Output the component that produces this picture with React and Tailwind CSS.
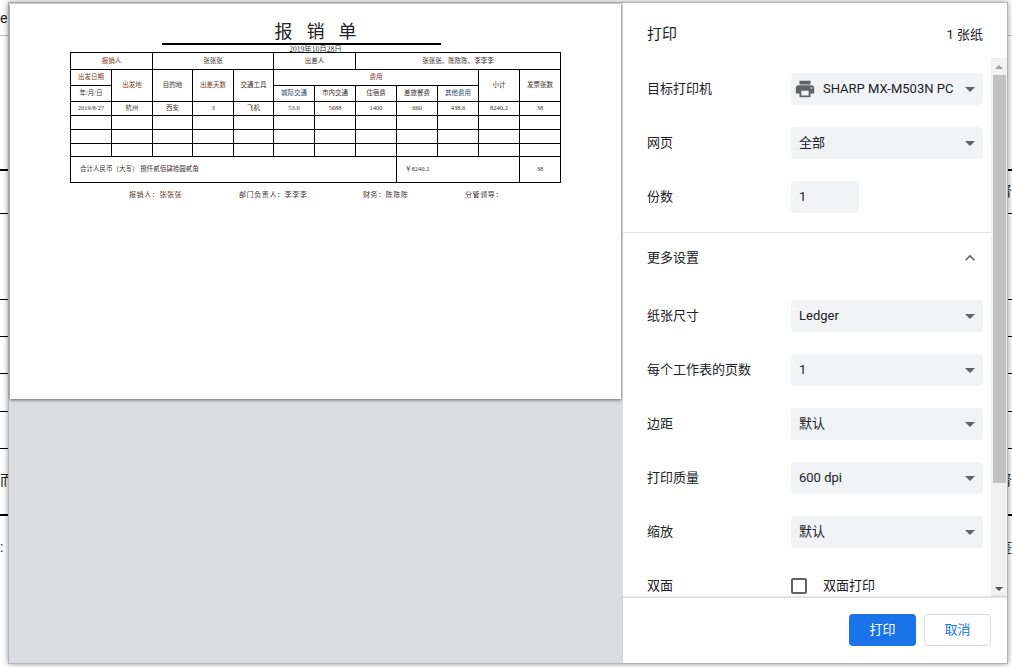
import React from 'react';

const bgRows = [
  { h: 36, left: 'e', border: 'border-b border-[#bdbdbd]', pb: 'pb-[7px]' },
  { h: 135, border: 'border-b-2 border-black' },
  { h: 43, right: '肾', border: 'border-b border-black', pb: 'pb-[12px]' },
  { h: 86, border: 'border-b border-black' },
  { h: 37, border: 'border-b border-black' },
  { h: 37, border: 'border-b border-black' },
  { h: 38, border: 'border-b border-black' },
  { h: 37, border: 'border-b border-black' },
  { h: 67, left: '而', right: '肾', border: 'border-b-2 border-black', pb: 'pb-[24px]' },
  { h: 44, left: ':', right: '鉴', border: '', pb: 'pb-[3px]' },
];

const colWidths = [41, 41, 40, 41, 40, 41, 41, 41, 41, 41, 41, 41];

const Td = ({ children, className = '', ...rest }) => (
  <td className={`border border-black text-center p-0 ${className}`} {...rest}>{children}</td>
);

const Caret = () => (
  <svg width="10" height="5" viewBox="0 0 10 5" className="shrink-0">
    <polygon points="0,0 10,0 5,5" fill="#5f6368" />
  </svg>
);

const Select = ({ value, icon }) => (
  <div className="w-[192px] h-8 rounded bg-[#f1f3f4] flex items-center pl-2 pr-[8px] text-[13px] text-[#202124]">
    {icon}
    <span className="flex-1 min-w-0 whitespace-nowrap">{value}</span>
    <div className="pl-[14px]"><Caret /></div>
  </div>
);

const Row = ({ label, children }) => (
  <div className="flex items-center h-8 mb-[22px]">
    <div className="w-[144px] shrink-0 text-[13px] text-[#202124]">{label}</div>
    {children}
  </div>
);

const PrinterIcon = () => (
  <svg width="22" height="22" viewBox="0 0 24 24" fill="#5f6368" className="shrink-0 -ml-[5px] mr-[7px]">
    <path d="M19 8H5c-1.66 0-3 1.34-3 3v6h4v4h12v-4h4v-6c0-1.66-1.34-3-3-3zm-3 11H8v-5h8v5zm3-7c-.55 0-1-.45-1-1s.45-1 1-1 1 .45 1 1-.45 1-1 1zm-1-9H6v4h12V3z" />
  </svg>
);

const Paper = () => (
  <div className="w-[611px] h-[395px] bg-white shadow-[0_1px_3px_rgba(0,0,0,0.55)] pt-[18px] font-['Liberation_Serif','Noto_Sans_CJK_SC',serif] text-[#3a3230]">
    <div className="w-[491px] ml-[60px]">
      <div className="text-center text-[18px] leading-[21px] tracking-[14px] pl-[14px] text-[#222]">报销单</div>
      <div className="w-[279px] h-[2px] bg-black ml-[92px]" />
      <div className="text-center text-[7.5px] leading-[7px] h-[7px] pt-[1px] text-[#333]">2019年10月28日</div>
      <table className="table-fixed border-collapse w-[491px] text-[6.5px] leading-none">
        <colgroup>
          {colWidths.map((w, i) => <col key={i} style={{ width: w }} />)}
        </colgroup>
        <tbody>
          <tr className="h-[17px]">
            <Td colSpan={2} className="text-[#7a3b1e]">报销人</Td>
            <Td colSpan={3}>张张张</Td>
            <Td colSpan={2}>出差人</Td>
            <Td colSpan={5}>张张张、陈陈陈、李李李</Td>
          </tr>
          <tr className="h-[16px]">
            <Td className="text-[#7a3b1e]">出发日期</Td>
            <Td rowSpan={2} className="text-[#7a3b1e]">出发地</Td>
            <Td rowSpan={2}>目的地</Td>
            <Td rowSpan={2} className="text-[#7a3b1e]">出差天数</Td>
            <Td rowSpan={2}>交通工具</Td>
            <Td colSpan={5} className="text-[#7a3b1e]">费用</Td>
            <Td rowSpan={2}>小计</Td>
            <Td rowSpan={2}>发票张数</Td>
          </tr>
          <tr className="h-[16px]">
            <Td>年/月/日</Td>
            <Td className="text-[#2a4a70]">城际交通</Td>
            <Td>市内交通</Td>
            <Td>住宿费</Td>
            <Td>差旅餐费</Td>
            <Td className="text-[#2a4a70]">其他费用</Td>
          </tr>
          <tr className="h-[14px]">
            {['2019/8/27', '杭州', '西安', '3', '飞机', '53.6', '5688', '1400', '660', '438.6', '8240.2', '38'].map((v, i) => (
              <Td key={i}>{v}</Td>
            ))}
          </tr>
          {[14, 14, 13].map((h, r) => (
            <tr key={r} style={{ height: h }}>
              {colWidths.map((_, i) => <Td key={i} />)}
            </tr>
          ))}
          <tr className="h-[26px]">
            <Td colSpan={8} className="text-left pl-[9px]">合计人民币（大写） 捌仟贰佰肆拾圆贰角</Td>
            <Td colSpan={3} className="text-left pl-2">￥8240.2</Td>
            <Td>38</Td>
          </tr>
        </tbody>
      </table>
      <div className="flex mt-[7px] h-[10px] items-center text-[7px] tracking-[0.6px] whitespace-nowrap">
        <span className="ml-[59px] w-[110px] text-[#5a3520]">报销人：张张张</span>
        <span className="w-[124px]">部门负责人：李李李</span>
        <span className="w-[102px]">财务：陈陈陈</span>
        <span>分管领导：</span>
      </div>
    </div>
  </div>
);

export default function App() {
  return (
    <div className="relative w-[1012px] h-[667px] overflow-hidden bg-white font-['Roboto','Noto_Sans_CJK_SC',sans-serif]">
      {/* page behind the dialog */}
      <div className="flex flex-col">
        {bgRows.map((r, i) => (
          <div key={i} style={{ height: r.h }} className={`flex justify-between items-end text-[14px] leading-[20px] text-[#222] ${r.border} ${r.pb || ''}`}>
            <span>{r.left}</span>
            <span>{r.right}</span>
          </div>
        ))}
      </div>

      {/* print dialog */}
      <div className="absolute left-[8px] top-[2px] w-[1000px] h-[662px] flex bg-[#dadce0] border border-[#b5b5b5] shadow-[0_0_6px_rgba(0,0,0,0.4)]">
        <div className="w-[613px] pl-px pt-px shrink-0">
          <Paper />
        </div>
        <div className="w-[384px] shrink-0 bg-white flex flex-col ml-px">
          <div className="h-[55px] shrink-0 flex items-center justify-between px-[24px] pt-[8px] text-[#202124]">
            <span className="text-[15px]">打印</span>
            <span className="text-[13px]">1 张纸</span>
          </div>
          <div className="flex-1 flex min-h-0">
            <div className="w-[368px] shrink-0 overflow-hidden pt-[15px]">
              <div className="pl-[24px] pr-[8px]">
                <Row label="目标打印机"><Select icon={<PrinterIcon />} value="SHARP MX-M503N PC" /></Row>
                <Row label="网页"><Select value="全部" /></Row>
                <Row label="份数">
                  <div className="w-[68px] h-8 rounded bg-[#f1f3f4] flex items-center pl-2 text-[13px] text-[#202124]">1</div>
                </Row>
              </div>
              <div className="h-px bg-[#e5e5e5] -mt-[3px]" />
              <div className="pl-[24px] pr-[8px] h-[50px] flex items-center justify-between text-[13px] text-[#202124]">
                <span>更多设置</span>
                <svg width="20" height="20" viewBox="0 0 24 24" fill="#5f6368" className="mr-[3px]">
                  <path d="M12 8l-6 6 1.41 1.41L12 10.83l4.59 4.58L18 14z" />
                </svg>
              </div>
              <div className="pl-[24px] pr-[8px] pt-[17px]">
                <Row label="纸张尺寸"><Select value="Ledger" /></Row>
                <Row label="每个工作表的页数"><Select value="1" /></Row>
                <Row label="边距"><Select value="默认" /></Row>
                <Row label="打印质量"><Select value="600 dpi" /></Row>
                <Row label="缩放"><Select value="默认" /></Row>
                <Row label="双面">
                  <div className="flex items-center">
                    <div className="w-4 h-4 border-2 border-[#5f6368] rounded-[2px] mr-4" />
                    <span className="text-[13px] text-[#202124]">双面打印</span>
                  </div>
                </Row>
              </div>
            </div>
            {/* scrollbar */}
            <div className="w-4 bg-[#f1f1f1] flex flex-col items-center shrink-0">
              <div className="h-[17px] flex items-center justify-center">
                <svg width="8" height="4" viewBox="0 0 8 4"><polygon points="0,4 8,4 4,0" fill="#a3a3a3" /></svg>
              </div>
              <div className="w-[13px] h-[408px] bg-[#c1c1c1]" />
              <div className="flex-1 flex items-end pb-[6px]">
                <svg width="8" height="4" viewBox="0 0 8 4"><polygon points="0,0 8,0 4,4" fill="#505050" /></svg>
              </div>
            </div>
          </div>
          <div className="h-[66px] shrink-0 border-t border-[#dadce0] shadow-[0_-1px_2px_rgba(0,0,0,0.12)] z-10 bg-white flex justify-end items-start gap-2 pt-[16px] pr-[16px]">
            <button className="w-[67px] h-8 rounded bg-[#1a73e8] text-white text-[13px]">打印</button>
            <button className="w-[67px] h-8 rounded bg-white border border-[#dadce0] text-[#1a73e8] text-[13px]">取消</button>
          </div>
        </div>
      </div>
    </div>
  );
}
